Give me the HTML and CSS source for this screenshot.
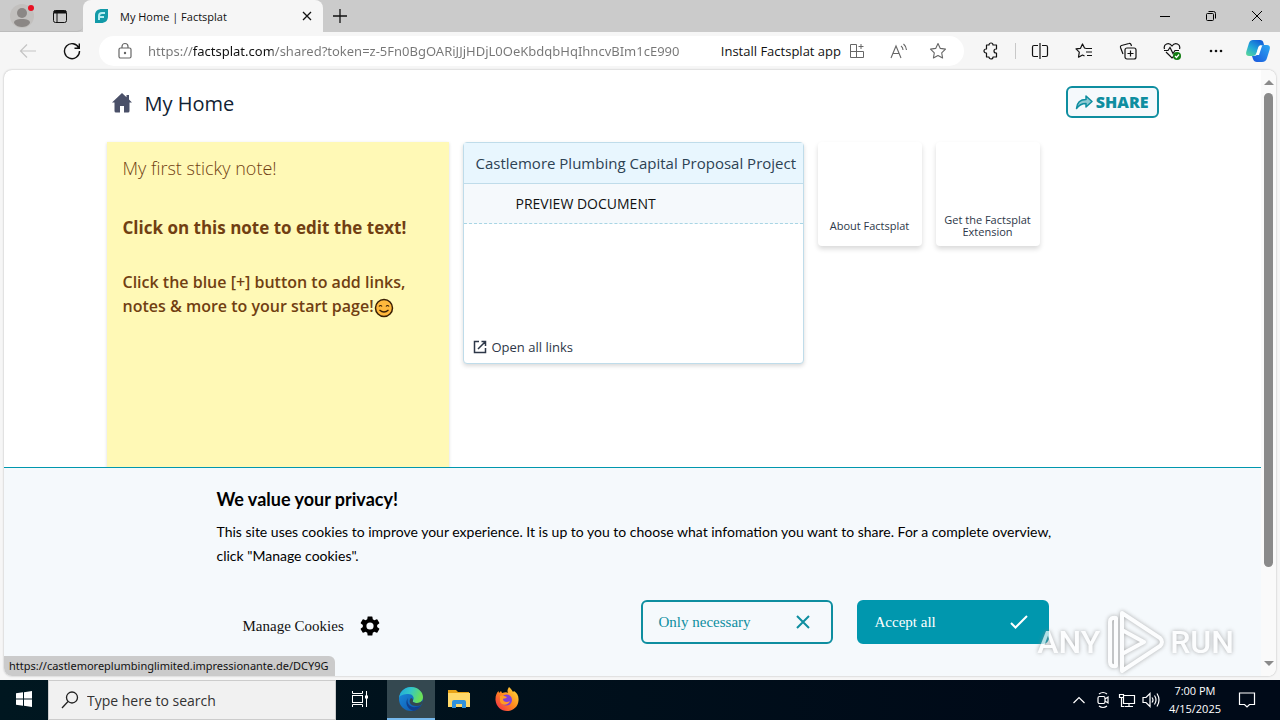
FILE: index.html
```
<!DOCTYPE html>
<html lang="en">

<head>
    <meta charset="UTF-8">
    <meta name="viewport" content="width=device-width, initial-scale=1.0">
    <title>My Home | Factsplat</title>
    <link rel="stylesheet" href="styles.css">
</head>

<body>
    <div class="titlebar">
        <div class="titlebar-left">
            <button class="icon-btn profile" aria-label="Profile">
                <svg width="24" height="24" viewBox="0 0 24 24"><circle cx="12" cy="12" r="12" fill="#c2c0be"/><circle cx="12" cy="9" r="5" fill="#8b8785"/><path d="M4 19c0-3 3-4 8-4s8 1 8 4c-2 3-5 4-8 4s-6-1-8-4z" fill="#8b8785"/><circle cx="21" cy="4" r="3" fill="#e81123"/></svg>
            </button>
            <button class="icon-btn" aria-label="Tab actions">
                <svg width="16" height="16" viewBox="0 0 16 16" fill="none" stroke="#111"><rect x="1.5" y="2.5" width="13" height="12" rx="2"/><path d="M2 4h12" stroke-width="3"/><path d="M5 5v9"/></svg>
            </button>
        </div>
        <div class="tab">
            <svg width="16" height="16" viewBox="0 0 16 16"><path d="M1 15V7c0-4 3-6 7-6h6v7c0 5-3 7-7 7z" fill="#129aa8"/><path d="M5 12V8c0-2 1-3 3-3h3M5 9h5" fill="none" stroke="#b5edf2" stroke-width="2"/></svg>
            <span class="tab-title">My Home | Factsplat</span>
            <button class="icon-btn" aria-label="Close tab">
                <svg width="16" height="16" viewBox="0 0 16 16" stroke="#111" stroke-width="1.3"><path d="M4 4l8 8M12 4l-8 8"/></svg>
            </button>
        </div>
        <button class="icon-btn new-tab" aria-label="New tab">
            <svg width="16" height="16" viewBox="0 0 16 16" stroke="#111" stroke-width="1.3"><path d="M8 1v14M1 8h14"/></svg>
        </button>
        <div class="window-buttons">
            <button aria-label="Minimize"><svg width="12" height="12" viewBox="0 0 12 12" stroke="#000"><path d="M1 6.500h10"/></svg></button>
            <button aria-label="Restore"><svg width="12" height="12" viewBox="0 0 12 12" fill="none" stroke="#000"><rect x="1.500" y="3.500" width="7" height="7" rx="1"/><path d="M3.500 1.500h5q2 0 2 2v5"/></svg></button>
            <button aria-label="Close"><svg width="12" height="12" viewBox="0 0 12 12" stroke="#000"><path d="M1 1l10 10M11 1L1 11"/></svg></button>
        </div>
    </div>

    <div class="toolbar">
        <button class="icon-btn" aria-label="Back">
            <svg width="18" height="18" viewBox="0 0 18 18" fill="none" stroke="#c4c4c4" stroke-width="1.2"><path d="M17 9H1.500M8 2.500L1.500 9 8 15.500"/></svg>
        </button>
        <button class="icon-btn" aria-label="Refresh">
            <svg width="18" height="18" viewBox="0 0 18 18" fill="none" stroke="#111" stroke-width="1.4"><path d="M15.800 6A7.500 7.500 0 1 0 16.500 9M16.300 1.500v4.800h-4.800"/></svg>
        </button>
        <div class="address">
            <svg width="16" height="18" viewBox="0 0 16 18" fill="none" stroke="#666" stroke-width="1.2"><rect x="2" y="6" width="12" height="10" rx="1.500"/><path d="M5 6V4.500a3 3 0 0 1 6 0V6"/><circle cx="8" cy="11" r=".6" fill="#666"/></svg>
            <input class="url" type="text" aria-label="Address" value="https://factsplat.com/shared?token=z-5Fn0BgOARiJJjHDjL0OeKbdqbHqIhncvBIm1cE990">
            <button class="install">Install Factsplat app
                <svg width="16" height="16" viewBox="0 0 16 16" fill="none" stroke="#666"><path d="M7.500 1.500h-6v13h13v-6h-13M7.500 1.500v13M12 1v5M9.500 3.500h5"/></svg>
            </button>
            <button class="icon-btn" aria-label="Read aloud">
                <svg width="18" height="16" viewBox="0 0 18 16" fill="none" stroke="#666" stroke-width="1.1"><path d="M1 15L6 3l5 12M3 10.500h6.500M11 3q2 1.500 2 4M13.500 1q3 2.500 3 6"/></svg>
            </button>
            <button class="icon-btn" aria-label="Add to favorites">
                <svg width="18" height="18" viewBox="0 0 18 18" fill="none" stroke="#666" stroke-width="1.100" stroke-linejoin="round"><path d="M9 1.500l2.300 4.900 5.200.7-3.800 3.700.9 5.200L9 13.500 4.400 16l.9-5.200L1.500 7.100l5.200-.7z"/></svg>
            </button>
        </div>
        <div class="tools">
            <button class="icon-btn" aria-label="Extensions">
                <svg width="18" height="18" viewBox="0 0 18 18" fill="none" stroke="#111" stroke-width="1.200" stroke-linejoin="round"><path d="M4.500 3H7a2 2 0 0 1 4 0h3.500v4H14a2 2 0 0 0 0 4h.5v4H11a2 2 0 0 1-4 0H4.500v-4H4a2 2 0 0 1 0-4h.5z"/></svg>
            </button>
            <span class="divider"></span>
            <button class="icon-btn" aria-label="Split screen">
                <svg width="18" height="18" viewBox="0 0 18 18" fill="none" stroke="#111" stroke-width="1.200"><path d="M7 3.500H3q-1.500 0-1.500 1.500v8q0 1.500 1.500 1.500h4M11 3.500h4q1.500 0 1.500 1.500v8q0 1.500-1.500 1.500h-4M9 1v16"/></svg>
            </button>
            <button class="icon-btn" aria-label="Favorites">
                <svg width="18" height="18" viewBox="0 0 18 18" fill="none" stroke="#111" stroke-width="1.200" stroke-linejoin="round"><path d="M11 6.500L9.500 6 7.500 2 5.500 6.300l-4.500.6 3.300 3.300-.8 5L7.500 13l2 1M11 6.500h6M11 10h6M12 13.500h5"/></svg>
            </button>
            <button class="icon-btn" aria-label="Collections">
                <svg width="18" height="18" viewBox="0 0 18 18" fill="none" stroke="#111" stroke-width="1.200"><rect x="6" y="6" width="11" height="11" rx="2"/><path d="M11.500 8.500v6M8.500 11.500h6M4 12L1.500 5.500q-.5-1.500 1-2L10 1.500q1.500-.5 2 1l.5 1.500"/></svg>
            </button>
            <button class="icon-btn" aria-label="Browser essentials">
                <svg width="18" height="18" viewBox="0 0 18 18" fill="none" stroke="#111" stroke-width="1.200"><path d="M1.500 7C0 2 6-.5 9 4c3-4.500 9-2 7.500 3M3 10l6 6 2-2M1 8.500h4l2-3 3 6 2-3h4"/><circle cx="14" cy="14" r="4" fill="#107c10" stroke="none"/><path d="M12 14l1.500 1.500L16 12.500" stroke="#fff"/></svg>
            </button>
            <button class="icon-btn" aria-label="Settings and more">
                <svg width="18" height="18" viewBox="0 0 18 18" fill="#111"><circle cx="4" cy="9" r="1.300"/><circle cx="9" cy="9" r="1.300"/><circle cx="14" cy="9" r="1.300"/></svg>
            </button>
            <button class="icon-btn copilot" aria-label="Copilot">
                <svg width="24" height="24" viewBox="0 0 24 24"><defs><linearGradient id="cpa" x1="0" y1="1" x2=".7" y2="0"><stop offset="0" stop-color="#5edc92"/><stop offset=".5" stop-color="#23a8d8"/><stop offset="1" stop-color="#1260d8"/></linearGradient><linearGradient id="cpb" x1="0" y1="1" x2="1" y2="0"><stop offset="0" stop-color="#1a55dc"/><stop offset="1" stop-color="#2ba7f2"/></linearGradient></defs><path d="M7 1h7q3 0 3.500 3L18 6h-3q-2 0-3 3l-1.500 5q-1 3-4 3H3q-4 0-2.500-5L3 4q1-3 4-3z" fill="url(#cpa)"/><path d="M17 6h4q4 0 2.500 5L21 19q-1 4-5 4h-5q-3 0-4-3l-1-3h2q3 0 4-3l2-5q1-3 3-3z" fill="url(#cpb)"/><path d="M13 7h3l-3 9h-3z" fill="#fff"/></svg>
            </button>
        </div>
    </div>

    <div class="viewport">
        <main class="page">
            <header class="page-header">
                <svg class="home" width="22" height="22" viewBox="0 0 22 22" fill="#4a5068"><path d="M11 1L1 10.500h2.500V19q0 1.500 1.500 1.500h4V14h4v6.500h4q1.500 0 1.500-1.500v-8.500H21l-3-3V3h-2.500v2.200z"/></svg>
                <h1>My Home</h1>
                <button class="share">
                    <svg width="18" height="16" viewBox="0 0 18 16"><path d="M1.500 14.500C2 8.500 5.500 5.500 11 5.500V2l6 5.500-6 5.500V9.500c-4 0-7 1.500-9.500 5z" fill="#8dc9d2" stroke="#0e8ea0" stroke-width="1.500" stroke-linejoin="round"/></svg>
                    SHARE
                </button>
            </header>

            <div class="board">
                <section class="note">
                    <p class="note-intro">My first sticky note!</p>
                    <p class="note-lead">Click on this note to edit the text!</p>
                    <p class="note-text">Click the blue [+] button to add links, notes &amp; more to your start page!<svg class="smile" width="20" height="20" viewBox="0 0 20 20"><circle cx="10" cy="10" r="8.500" fill="#ffb83d" stroke="#3a2005" stroke-width="1.500"/><path d="M5 8.500q1.500-2 3 0M12 8.500q1.500-2 3 0M5.500 12q4.500 4 9 0" fill="none" stroke="#3a2005" stroke-width="1.200"/></svg></p>
                </section>

                <section class="links">
                    <h2>Castlemore Plumbing Capital Proposal Project</h2>
                    <a class="link-row" href="#">PREVIEW DOCUMENT</a>
                    <a class="open-all" href="#">
                        <svg width="14" height="14" viewBox="0 0 14 14" fill="none" stroke="#2d3748" stroke-width="1.500"><path d="M6 1.500H1.500v11h11V8M8.500 1.500h4V6M12.500 1.500L5 9"/></svg>
                        Open all links
                    </a>
                </section>

                <a class="tile" href="#"><span>About Factsplat</span></a>
                <a class="tile" href="#"><span>Get the Factsplat Extension</span></a>
            </div>
        </main>

        <div class="scrollbar">
            <span class="arrow-up"></span>
            <span class="thumb"></span>
            <span class="arrow-down"></span>
        </div>

        <section class="cookies">
            <div class="cookies-inner">
                <h2>We value your privacy!</h2>
                <p>This site uses cookies to improve your experience. It is up to you to choose what infomation you want to share. For a complete overview, click "Manage cookies".</p>
                <div class="cookie-actions">
                    <button class="manage">Manage Cookies
                        <svg width="24" height="24" viewBox="0 0 24 24"><path d="M19.140 12.940c.04-.3.060-.61.060-.94s-.02-.64-.07-.94l2.030-1.580a.49.49 0 0 0 .12-.61l-1.920-3.320a.49.49 0 0 0-.59-.22l-2.390.96c-.5-.38-1.030-.7-1.620-.94l-.36-2.540a.48.48 0 0 0-.48-.41h-3.840c-.24 0-.43.17-.47.41l-.36 2.540c-.59.24-1.130.57-1.620.94l-2.390-.96a.49.49 0 0 0-.59.22L2.740 8.870c-.12.21-.08.47.12.61l2.030 1.580c-.05.3-.09.63-.09.94s.02.64.07.94l-2.030 1.580a.49.49 0 0 0-.12.61l1.920 3.320c.12.22.37.29.59.22l2.390-.96c.5.38 1.030.7 1.620.94l.36 2.540c.05.24.24.41.48.41h3.840c.24 0 .44-.17.47-.41l.36-2.540c.59-.24 1.130-.56 1.620-.94l2.390.96c.22.08.47 0 .59-.22l1.920-3.320a.49.49 0 0 0-.12-.61zM12 15.600a3.600 3.600 0 1 1 0-7.200 3.600 3.600 0 0 1 0 7.200z"/></svg>
                    </button>
                    <button class="choice">Only necessary
                        <svg width="24" height="24" viewBox="0 0 24 24" stroke="#0e8ea0" stroke-width="2"><path d="M6 6l12 12M18 6L6 18"/></svg>
                    </button>
                    <button class="choice accept">Accept all
                        <svg width="24" height="24" viewBox="0 0 24 24" fill="none" stroke="#fff" stroke-width="2"><path d="M4 13l4.500 4.500L20 6"/></svg>
                    </button>
                </div>
            </div>
        </section>

        <div class="status">https://castlemoreplumbinglimited.impressionante.de/DCY9G</div>
    </div>

    <div class="taskbar">
        <button class="task" aria-label="Start">
            <svg width="16" height="16" viewBox="0 0 16 16" fill="#fff"><path d="M0 2.300L7 1.300v6.200H0zM8 1.200L16 0v7.500H8zM0 8.500h7v6.200l-7-1zM8 8.500h8V16l-8-1.200z"/></svg>
        </button>
        <label class="search">
            <svg width="18" height="18" viewBox="0 0 18 18" fill="none" stroke="#222" stroke-width="1.300"><circle cx="11" cy="6.500" r="5.500"/><path d="M7 10.500L1 17"/></svg>
            <input type="text" placeholder="Type here to search" aria-label="Search">
        </label>
        <button class="task" aria-label="Task view">
            <svg width="18" height="18" viewBox="0 0 18 18" fill="none" stroke="#fff"><rect x="1.500" y="5.500" width="10" height="7"/><path d="M1.500 1v2.500h10V1M1.500 17v-2.500h10V17M15.500 1v16"/><path d="M14 5.500h3v3h-3z" fill="#fff" stroke="none"/></svg>
        </button>
        <button class="task active" aria-label="Edge">
            <svg width="24" height="24" viewBox="0 0 24 24"><defs><linearGradient id="eda" x1="0" y1="0" x2="1" y2=".3"><stop offset="0" stop-color="#1da5dc"/><stop offset=".5" stop-color="#33c6c8"/><stop offset="1" stop-color="#6be057"/></linearGradient><linearGradient id="edb" x1="0" y1="0" x2="1" y2="1"><stop offset="0" stop-color="#1b8fe0"/><stop offset="1" stop-color="#0c4fa6"/></linearGradient></defs><circle cx="12" cy="12" r="12" fill="url(#edb)"/><path d="M0 11C1 4 6 0 12 0c7 0 12 5 12 10 0 4-3 6-6 6-3 0-5-1-4-2.500 2-3-.5-6.500-4.500-6.500C5 7 1 8 0 11z" fill="url(#eda)"/><path d="M9 11c-2 5 2 10 8 9 2 0 4-1 5-2-1 3-4 5-7 6C9 23 5 16 9 11z" fill="#123f8c"/><path d="M14 13.500c-1 1.500 1 2.500 4 2.500 2 0 4-1 5-2l1 1-2 3c-4 2-10 1-11-2-1-2 0-4 1-5 1 0 2 1 2 2.500z" fill="#344850"/></svg>
        </button>
        <button class="task" aria-label="File Explorer">
            <svg width="22" height="20" viewBox="0 0 22 20"><path d="M0 1h8l2 2h11v5H0z" fill="#e8a317"/><path d="M0 4h22v14H0z" fill="#ffd869"/><path d="M4 19v-6q0-2 2-2h10q2 0 2 2v6h-4v-4H8v4z" fill="#3192dc"/></svg>
        </button>
        <button class="task" aria-label="Firefox">
            <svg width="24" height="24" viewBox="0 0 24 24"><defs><linearGradient id="ffa" x1="1" y1="0" x2="0" y2="1"><stop offset="0" stop-color="#ffe23d"/><stop offset=".5" stop-color="#ff8a1e"/><stop offset="1" stop-color="#f0204e"/></linearGradient></defs><path d="M14 0c2 2 3 3 4 5l1-1c3 2 5 5 4.500 9.500C23 20 18 24 12 24S1 19.500.5 13C.3 9 1.500 6 3.500 4L4 6l2-2 1 2c3-1 5-1 6 0-1-2-.5-4 1-6z" fill="url(#ffa)"/><circle cx="11.500" cy="13" r="5.500" fill="#8340d8"/><path d="M5 9c3-1 4 0 7 1-1 2-3 1-4 2 0 3 4 4 7 2-2 5-9 5-10 0z" fill="#ff9a25"/></svg>
        </button>
        <div class="tray">
            <svg width="18" height="10" viewBox="-2 0 18 10" fill="none" stroke="#fff" stroke-width="1.200"><path d="M1.500 8L7 2.500 12.500 8"/></svg>
            <svg width="18" height="18" viewBox="-2 0 18 18" fill="none" stroke="#fff" stroke-width="1.200"><rect x="2" y="5.500" width="7" height="7" rx="1.500"/><path d="M9 8l3-2v6l-3-2M3 3q4-3 8 0M3 15q4 3 8 0"/></svg>
            <svg width="18" height="16" viewBox="0 0 18 16" fill="none" stroke="#fff" stroke-width="1.200"><path d="M5.500 3.500h11v8h-11zM11 11.500v3M7 14.500h8M1.500 2.500h4v3h-4zM3.500 5.500v9h3"/></svg>
            <svg width="18" height="16" viewBox="0 0 18 16" fill="none" stroke="#fff" stroke-width="1.200"><path d="M1 5.500h3l4-4v13l-4-4H1zM10 5.500q2 2.500 0 5M12.500 3.500q3 4.500 0 9M15 1.500q4 6.500 0 13"/></svg>
            <div class="clock"><span>7:00 PM</span><span>4/15/2025</span></div>
            <svg width="18" height="18" viewBox="0 0 18 18" fill="none" stroke="#fff" stroke-width="1.200"><path d="M1.500 2h15v11.500h-5L9 16l-2.500-2.500h-5z"/></svg>
        </div>
    </div>

    <div class="watermark">
        <span>ANY</span>
        <svg width="58" height="64" viewBox="0 0 58 64" fill="none" stroke="#fff" stroke-width="4" stroke-linejoin="round"><path d="M16 3l38 25q4 4 0 8L16 61V44l22-12-22-12z"/><path d="M16 20v24M10 8q-6-1-6 4v40q0 5 6 4z"/></svg>
        <span>RUN</span>
    </div>
</body>

</html>
```
FILE: styles.css
```
* {
    box-sizing: border-box;
}

body {
    margin: 0;
    height: 100vh;
    display: flex;
    flex-direction: column;
    overflow: hidden;
    background-color: #f6f6f6;
    font-family: "Open Sans", sans-serif;
    font-size: 12px;
    color: #111;
}

h1, h2, p {
    margin: 0;
}

button, input {
    font-family: inherit;
    font-size: inherit;
    color: inherit;
    border: none;
    outline: none;
    background: none;
    padding: 0;
}

a {
    color: inherit;
    text-decoration: none;
}

svg {
    flex: none;
    display: block;
}

.icon-btn {
    display: flex;
    align-items: center;
    justify-content: center;
}

/* browser chrome */
.titlebar {
    display: flex;
    flex: none;
    height: 32px;
    background-color: #cbcbcb;
}

.titlebar-left {
    display: flex;
    align-items: center;
    gap: 18px;
    width: 83px;
    padding-left: 10px;
    border-bottom: 1px solid #bcbcbc;
    border-bottom-right-radius: 6px;
}

.tab {
    display: flex;
    align-items: center;
    gap: 10px;
    width: 240px;
    padding: 0 8px 0 11px;
    border-radius: 8px 8px 0 0;
    background-color: #f6f6f6;
}

.tab-title {
    flex: 1;
    font-size: 11px;
}

.new-tab {
    width: 34px;
}

.window-buttons {
    display: flex;
    margin-left: auto;
}

.window-buttons button {
    width: 46px;
    display: flex;
    align-items: center;
    justify-content: center;
}

.toolbar {
    display: flex;
    flex: none;
    align-items: center;
    height: 38px;
    padding: 0 10px 0 19px;
    gap: 26px;
}

.address {
    display: flex;
    flex: 1;
    align-items: center;
    height: 30px;
    margin-left: -8px;
    padding: 0 17px 0 18px;
    gap: 15px;
    border-radius: 15px;
    background-color: #fff;
}

.url {
    flex: 1;
    min-width: 0;
    font-family: "Noto Sans", sans-serif;
    font-size: 13px;
    color: transparent;
    background: linear-gradient(90deg, #767676 45px, #111 45px, #111 125px, #767676 125px);
    -webkit-background-clip: text;
    background-clip: text;
}

.install {
    display: flex;
    align-items: center;
    gap: 8px;
    margin-right: 4px;
    font-size: 13px;
}

.address .icon-btn {
    margin-left: 6px;
}

.tools {
    display: flex;
    align-items: center;
    gap: 26px;
    margin-left: -8px;
}

.divider {
    width: 1px;
    height: 16px;
    margin: 0 -11px;
    background-color: #c8c8c8;
}

.copilot {
    margin-left: -5px;
}

/* page */
.viewport {
    position: relative;
    display: flex;
    flex: 1;
    min-height: 0;
    margin: 0 4px 4px;
    overflow: hidden;
    border-radius: 8px;
    background-color: #fff;
    box-shadow: 0 0 2px #aaa;
}

.page {
    flex: 1;
    padding: 16px 24px;
}

.page-header {
    display: flex;
    align-items: flex-start;
    gap: 12px;
    max-width: 1052px;
    margin: 0 auto 20px;
    padding-left: 4px;
}

.home {
    margin-top: 6px;
}

.page-header h1 {
    flex: 1;
    font-size: 20px;
    font-weight: 400;
    line-height: 36px;
    color: #123;
}

.share {
    display: flex;
    align-items: center;
    gap: 3px;
    height: 32px;
    padding: 0 8px 0 7px;
    border: 2px solid #0e8ea0;
    border-radius: 6px;
    background-color: #f5f9fc;
    font-size: 16px;
    font-weight: 800;
    color: #0e8ea0;
}

.board {
    display: flex;
    align-items: flex-start;
    gap: 14px;
    max-width: 1052px;
    margin: 0 auto;
}

.note {
    width: 342px;
    height: 342px;
    padding: 12px 16px;
    background-color: #fff9b6;
    box-shadow: 0 1px 3px rgba(0, 0, 0, 0.15);
    color: #713f12;
}

.note-intro {
    margin-bottom: 32px;
    font-size: 18px;
    font-weight: 300;
    line-height: 28px;
}

.note-lead {
    margin-bottom: 28px;
    font-size: 17px;
    font-weight: 700;
    line-height: 28px;
}

.note-text {
    font-size: 16px;
    font-weight: 600;
    line-height: 24px;
}

.smile {
    display: inline-block;
    vertical-align: middle;
}

.links {
    display: flex;
    flex-direction: column;
    width: 341px;
    height: 222px;
    border: 1px solid #bfdcea;
    border-radius: 4px;
    background-color: #fff;
    box-shadow: 0 2px 4px rgba(0, 0, 0, 0.15);
}

.links h2 {
    padding-left: 12px;
    border-bottom: 1px solid #bfdcea;
    background-color: #e8f6fe;
    font-size: 15px;
    font-weight: 400;
    line-height: 40px;
    white-space: nowrap;
    color: #2d4254;
}

.link-row {
    padding-left: 52px;
    border-bottom: 1px dashed #a8d5e4;
    background-color: #f5f9fc;
    font-size: 14px;
    line-height: 39px;
    color: #111;
}

.open-all {
    display: flex;
    align-items: center;
    gap: 5px;
    margin-top: auto;
    padding-left: 9px;
    font-size: 13px;
    line-height: 32px;
    color: #2d3748;
}

.tile {
    display: flex;
    align-items: flex-end;
    justify-content: center;
    width: 104px;
    height: 104px;
    padding: 0 4px 8px;
    border-radius: 4px;
    box-shadow: 0 3px 5px rgba(0, 0, 0, 0.15);
    font-size: 11px;
    line-height: 12px;
    text-align: center;
    color: #2d3748;
}

.tile:nth-child(3) {
    padding-bottom: 14px;
}

.scrollbar {
    display: flex;
    flex-direction: column;
    align-items: center;
    width: 15px;
    padding: 10px 0;
    background-color: #fafafa;
}

.thumb {
    width: 9px;
    height: 474px;
    margin: 8px 0 auto;
    border-radius: 5px;
    background-color: #8a8a8a;
}

.arrow-up, .arrow-down {
    border: 5px solid transparent;
}

.arrow-up {
    border-top: none;
    border-bottom-color: #8a8a8a;
}

.arrow-down {
    border-bottom: none;
    border-top-color: #8a8a8a;
}

/* cookie banner */
.cookies {
    position: absolute;
    left: 0;
    right: 15px;
    bottom: 0;
    padding: 16px 24px 28px;
    border-top: 1px solid #0097ae;
    background-color: #f5f9fc;
}

.cookies-inner {
    max-width: 832px;
    margin: 0 auto;
}

.cookies h2 {
    margin-bottom: 6px;
    font-family: Lato, sans-serif;
    font-size: 18px;
    font-weight: 700;
    line-height: 30px;
    color: #000;
}

.cookies p {
    margin-right: -8px;
    font-family: Lato, sans-serif;
    font-size: 14px;
    line-height: 24px;
    color: #000;
}

.cookie-actions {
    display: flex;
    gap: 24px;
    margin-top: 32px;
}

.manage, .choice {
    display: flex;
    align-items: center;
    height: 44px;
    font-family: "Liberation Serif", serif;
    font-size: 15px;
}

.manage {
    gap: 14px;
    margin: 4px auto 0 26px;
}

.choice {
    justify-content: space-between;
    width: 192px;
    padding: 0 16px;
    border: 2px solid #0e8ea0;
    border-radius: 6px;
    color: #0e8ea0;
}

.accept {
    border-color: #0097ae;
    background-color: #0097ae;
    color: #fff;
}

.status {
    position: absolute;
    left: 0;
    bottom: 0;
    padding: 0 6px 0 5px;
    border-radius: 0 6px 0 0;
    background-color: #cbcbcb;
    font-family: "Noto Sans", sans-serif;
    font-size: 11px;
    line-height: 20px;
    color: #111;
}

/* taskbar */
.taskbar {
    display: flex;
    flex: none;
    height: 40px;
    background: linear-gradient(90deg, #001720, #000a18 80%);
    color: #fff;
}

.task {
    display: flex;
    align-items: center;
    justify-content: center;
    width: 48px;
    border-bottom: 2px solid transparent;
}

.task.active {
    margin-left: 3px;
    border-bottom-color: #76b9ed;
    background-color: #344850;
}

.search {
    display: flex;
    align-items: center;
    gap: 8px;
    width: 288px;
    padding-left: 12px;
    border: 1px solid #ccc;
    background-color: #f1f1f1;
}

.search input {
    flex: 1;
    font-size: 14px;
}

.search input::placeholder {
    color: #333;
}

.tray {
    display: flex;
    align-items: center;
    gap: 6px;
    margin-left: auto;
    padding-right: 24px;
}

.clock {
    display: flex;
    flex-direction: column;
    align-items: center;
    margin: 0 11px 0 3px;
    font-size: 11px;
    line-height: 18px;
}

.watermark {
    position: absolute;
    right: 46px;
    bottom: 46px;
    display: flex;
    align-items: center;
    gap: 6px;
    font-family: Roboto, sans-serif;
    font-size: 32px;
    font-weight: 500;
    color: #fff;
    opacity: 0.7;
    filter: drop-shadow(0 0 2px #888);
    pointer-events: none;
}
```
